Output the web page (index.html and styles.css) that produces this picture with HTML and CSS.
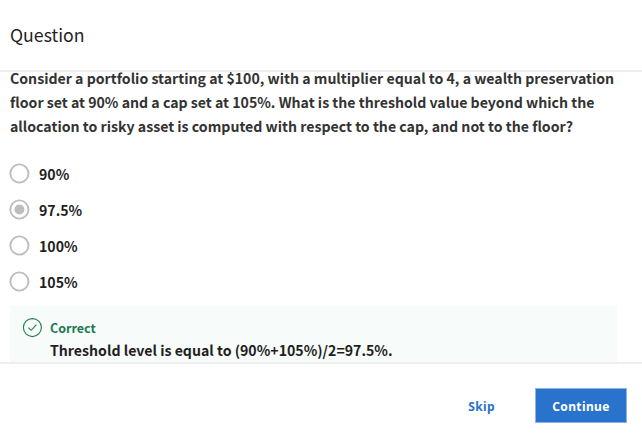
FILE: index.html
```html
<!DOCTYPE html>
<html lang="en">
<head>
<meta charset="utf-8">
<title>Question</title>
<link rel="stylesheet" href="styles.css">
</head>
<body>
<header class="header"><h1>Question</h1></header>
<main class="content">
  <p class="prompt"><span>Consider a portfolio starting at $100, with a multiplier equal to 4, a wealth preservation</span><br><span>floor set at 90% and a cap set at 105%. What is the threshold value beyond which the</span><br><span>allocation to risky asset is computed with respect to the cap, and not to the floor?</span></p>
  <div class="options">
    <div class="option"><svg class="radio" viewBox="0 0 21 21" width="21" height="21"><circle cx="10.4" cy="10.5" r="9.1"/></svg><span>90%</span></div>
    <div class="option"><svg class="radio" viewBox="0 0 21 21" width="21" height="21"><circle cx="10.4" cy="10.5" r="9.1"/><circle class="dot" cx="10.4" cy="10.5" r="5"/></svg><span>97.5%</span></div>
    <div class="option"><svg class="radio" viewBox="0 0 21 21" width="21" height="21"><circle cx="10.4" cy="10.5" r="9.1"/></svg><span>100%</span></div>
    <div class="option"><svg class="radio" viewBox="0 0 21 21" width="21" height="21"><circle cx="10.4" cy="10.5" r="9.1"/></svg><span>105%</span></div>
  </div>
  <section class="feedback">
    <svg class="check" viewBox="0 0 20 20" width="20" height="20"><circle cx="10.4" cy="9.6" r="9"/><path d="M6.4 9.6l2.8 2.7 5.2-5.7"/></svg>
    <div><div class="status">Correct</div><div class="note">Threshold level is equal to (90%+105%)/2=97.5%.</div></div>
  </section>
</main>
<footer class="footer"><button class="skip">Skip</button><button class="continue">Continue</button></footer>
</body>
</html>
```
FILE: styles.css
```css
* { box-sizing: border-box; }
body { margin: 0; width: 642px; height: 438px; overflow: hidden; display: flex; flex-direction: column; background: #fff; color: #1f1f1f; font-family: "Noto Sans CJK SC", "Noto Sans", sans-serif; }
.header { flex: none; height: 72px; padding: 20px 10px 0; border-bottom: 2px solid #eee; }
h1 { margin: 0; font-size: 17.7px; font-weight: 400; line-height: 28px; }
.content { flex: none; height: 290px; padding: 0 10px; font-size: 14.13px; font-weight: 700; }
.prompt { margin: -6px 0 0; line-height: 24px; white-space: nowrap; color: #333; }
.options { margin-top: 18px; }
.option { display: flex; align-items: center; height: 36px; gap: 9px; }
.radio { flex: none; margin: -2px 0 0 -1px; fill: none; stroke: #bdbdbd; stroke-width: 1.9; }
.dot { fill: #bdbdbd; stroke: none; }
.feedback { display: flex; gap: 8px; width: 607px; height: 57px; margin-top: 6px; padding: 11px 12px; background: #f7fbf9; }
.check { flex: none; margin-top: 1px; overflow: visible; fill: none; stroke: #1d7c50; stroke-width: 1.1; }
.status { color: #1d7c50; font-size: 12.5px; line-height: 22px; }
.note { line-height: 22px; white-space: nowrap; }
.footer { flex: none; height: 76px; border-top: 2px solid #eee; display: flex; justify-content: flex-end; align-items: center; padding: 9px 15px 0 0; gap: 24px; }
button { border: 0; font: 700 12px "Noto Sans", sans-serif; letter-spacing: .38px; height: 35px; padding: 2px 16px 0; color: #2a73cc; background: none; }
.continue { width: 92px; color: #fff; background: #2a73cc; border: 1px solid #8db5e4; }
```
